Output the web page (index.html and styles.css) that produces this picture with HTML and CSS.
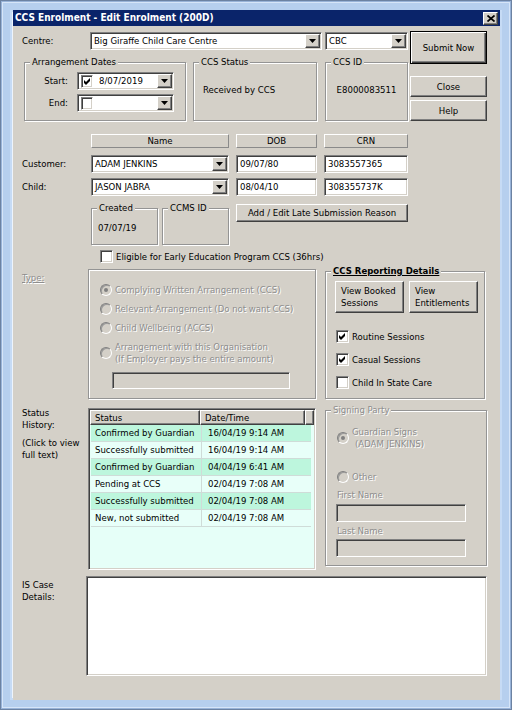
FILE: index.html
```html
<!DOCTYPE html>
<html lang="en">
<head>
<meta charset="utf-8">
<title>CCS Enrolment - Edit Enrolment</title>
<link rel="stylesheet" href="styles.css">
</head>
<body>
<div class="window">
  <div class="titlebar">
    <span class="title">CCS Enrolment - Edit Enrolment (200D)</span>
    <span class="xbtn raised"><svg width="8" height="7" viewBox="0 0 8 7"><path d="M0.5 0.5 7.5 6.5M7.5 0.5 0.5 6.5" stroke="#000" stroke-width="1.7"/></svg></span>
  </div>
  <div class="dialog">
    <!-- Section A -->
    <div class="sec-a">
      <div class="a-main">
        <div class="r-centre">
          <span class="lbl-centre">Centre:</span>
          <div class="combo sunken combo-centre"><span class="field-text">Big Giraffe Child Care Centre</span><span class="drop raised"></span></div>
          <div class="combo sunken combo-cbc"><span class="field-text">CBC</span><span class="drop raised"></span></div>
        </div>
        <div class="r-groups">
          <div class="group g-dates">
            <span class="gtitle">Arrangement Dates</span>
            <div class="dates-grid">
              <span class="dlbl">Start:</span>
              <div class="dtp sunken"><span class="cb"><svg width="7" height="7" viewBox="0 0 7 7"><polygon points="0,2 2,4 6,0 6,3 2,7 0,5"/></svg></span><span class="dtp-text">8/07/2019</span><span class="drop raised"></span></div>
              <span class="dlbl">End:</span>
              <div class="dtp sunken"><span class="cb"></span><span class="dtp-text"></span><span class="drop raised"></span></div>
            </div>
          </div>
          <div class="group g-status">
            <span class="gtitle">CCS Status</span>
            <div class="gval">Received by CCS</div>
          </div>
          <div class="group g-id">
            <span class="gtitle">CCS ID</span>
            <div class="gval gval-center">E8000083511</div>
          </div>
        </div>
      </div>
      <div class="a-buttons">
        <button class="btn btn-default btn-submit">Submit Now</button>
        <button class="btn raised btn-close">Close</button>
        <button class="btn raised btn-help">Help</button>
      </div>
    </div>

    <!-- Section B -->
    <div class="sec-b">
      <span class="colhead h-name">Name</span>
      <span class="colhead">DOB</span>
      <span class="colhead">CRN</span>

      <span class="rowlbl">Customer:</span>
      <div class="combo sunken"><span class="field-text">ADAM JENKINS</span><span class="drop raised"></span></div>
      <div class="tbox sunken">09/07/80</div>
      <div class="tbox sunken">3083557365</div>

      <span class="rowlbl">Child:</span>
      <div class="combo sunken"><span class="field-text">JASON JABRA</span><span class="drop raised"></span></div>
      <div class="tbox sunken">08/04/10</div>
      <div class="tbox sunken">308355737K</div>

      <div class="small-groups">
        <div class="group g-small">
          <span class="gtitle">Created</span>
          <div class="small-val">07/07/19</div>
        </div>
        <div class="group g-small">
          <span class="gtitle">CCMS ID</span>
        </div>
      </div>
      <button class="btn raised btn-late">Add / Edit Late Submission Reason</button>
    </div>

    <!-- Section C -->
    <div class="sec-c">
      <span class="cb"></span>
      <span>Eligible for Early Education Program CCS (36hrs)</span>
    </div>

    <!-- Section D -->
    <div class="sec-d">
      <span class="type-lbl disabled">Type:</span>
      <div class="group type-box">
        <div class="radio-row disabled"><span class="rb checked"></span><span>Complying Written Arrangement (CCS)</span></div>
        <div class="radio-row disabled"><span class="rb"></span><span>Relevant Arrangement (Do not want CCS)</span></div>
        <div class="radio-row disabled"><span class="rb"></span><span>Child Wellbeing (ACCS)</span></div>
        <div class="radio-row radio-two disabled"><span class="rb"></span><span class="two-lines">Arrangement with this Organisation<br>(If Employer pays the entire amount)</span></div>
        <div class="tbox sunken tbox-disabled type-input"></div>
      </div>
      <div class="group rep-group">
        <span class="gtitle gtitle-bold">CCS Reporting Details</span>
        <div class="rep-buttons">
          <button class="btn raised btn-two">View Booked<br>Sessions</button>
          <button class="btn raised btn-two">View<br>Entitlements</button>
        </div>
        <div class="check-list">
          <div class="check-row"><span class="cb"><svg width="7" height="7" viewBox="0 0 7 7"><polygon points="0,2 2,4 6,0 6,3 2,7 0,5"/></svg></span><span>Routine Sessions</span></div>
          <div class="check-row"><span class="cb"><svg width="7" height="7" viewBox="0 0 7 7"><polygon points="0,2 2,4 6,0 6,3 2,7 0,5"/></svg></span><span>Casual Sessions</span></div>
          <div class="check-row"><span class="cb"></span><span>Child In State Care</span></div>
        </div>
      </div>
    </div>

    <!-- Section E -->
    <div class="sec-e">
      <div class="hist-lbl">
        <div>Status<br>History:</div>
        <div class="hist-note">(Click to view<br>full text)</div>
      </div>
      <div class="list sunken">
        <div class="lhead">
          <span class="hc hc1 raised">Status</span>
          <span class="hc hc2 raised">Date/Time</span>
          <span class="hc hc3 raised"></span>
        </div>
        <div class="lrow hl"><span class="c1">Confirmed by Guardian</span><span class="c2">16/04/19 9:14 AM</span></div>
        <div class="lrow"><span class="c1">Successfully submitted</span><span class="c2">16/04/19 9:14 AM</span></div>
        <div class="lrow hl"><span class="c1">Confirmed by Guardian</span><span class="c2">04/04/19 6:41 AM</span></div>
        <div class="lrow"><span class="c1">Pending at CCS</span><span class="c2">02/04/19 7:08 AM</span></div>
        <div class="lrow hl"><span class="c1">Successfully submitted</span><span class="c2">02/04/19 7:08 AM</span></div>
        <div class="lrow"><span class="c1">New, not submitted</span><span class="c2">02/04/19 7:08 AM</span></div>
      </div>
      <div class="group sign-group">
        <span class="gtitle disabled">Signing Party</span>
        <div class="radio-row sign-guardian disabled"><span class="rb checked"></span><span class="two-lines">Guardian Signs<br><span class="indent">(ADAM JENKINS)</span></span></div>
        <div class="radio-row sign-other disabled"><span class="rb"></span><span>Other</span></div>
        <div class="field-lbl disabled">First Name</div>
        <div class="tbox sunken tbox-disabled sign-input"></div>
        <div class="field-lbl field-lbl-2 disabled">Last Name</div>
        <div class="tbox sunken tbox-disabled sign-input sign-input-2"></div>
      </div>
    </div>

    <!-- Section F -->
    <div class="sec-f">
      <div class="case-lbl">IS Case<br>Details:</div>
      <div class="textarea sunken"></div>
    </div>
  </div>
</div>
</body>
</html>
```

FILE: styles.css
```css
* { box-sizing: border-box; }

html, body {
  margin: 0;
  padding: 0;
}

body {
  width: 512px;
  height: 710px;
  overflow: hidden;
  font-family: "DejaVu Sans Condensed", "Liberation Sans", sans-serif;
  font-size: 9.5px;
  line-height: 12px;
  color: #000;
  background: #b8d0ee;
}

/* ---------- window frame ---------- */
.window {
  width: 512px;
  height: 710px;
  padding: 10px 12px 10px 13px;
  display: flex;
  flex-direction: column;
  background: #b8d0ee;
  box-shadow:
    inset 0 0 0 1px #6c82a2,
    inset 0 0 0 2px #98b3d8,
    inset 0 0 0 3px #d6e5f8,
    inset 0 0 0 10px #b6cfee,
    inset 0 0 0 12px #c6dbf5,
    inset 0 0 0 13px #eef4fc;
}

.titlebar {
  height: 16px;
  flex: none;
  background: #0a246a;
  display: flex;
  align-items: center;
  justify-content: space-between;
  padding-left: 2px;
}

.title {
  color: #fff;
  font-weight: bold;
  font-size: 10px;
  white-space: nowrap;
}

.xbtn {
  width: 15px;
  height: 13px;
  margin-right: 2px;
  display: flex;
  align-items: center;
  justify-content: center;
}

.dialog {
  flex: 1;
  background: #d4d0c8;
  padding: 5px 0 0 9px;
  display: flex;
  flex-direction: column;
}

/* ---------- common controls ---------- */
.sunken {
  border: 1px solid;
  border-color: #808080 #ffffff #ffffff #808080;
  box-shadow: inset 1px 1px 0 #404040, inset -1px -1px 0 #d4d0c8;
  background: #fff;
}

.raised {
  border: 1px solid;
  border-color: #ffffff #404040 #404040 #ffffff;
  box-shadow: inset -1px -1px 0 #808080;
  background: #d4d0c8;
}

.btn {
  font: inherit;
  color: #000;
  padding: 0;
  margin: 0;
  text-align: center;
  cursor: default;
}

.btn-default {
  border: 1px solid #000;
  background: #d4d0c8;
  box-shadow: inset 1px 1px 0 #fff, inset -1px -1px 0 #404040, inset -2px -2px 0 #808080;
}

.combo {
  height: 18px;
  padding: 1px;
  display: flex;
  align-items: center;
}

.field-text {
  flex: 1;
  padding-left: 2px;
  white-space: nowrap;
  overflow: hidden;
}

.drop {
  flex: none;
  width: 15px;
  height: 14px;
  display: flex;
  align-items: center;
  justify-content: center;
}

.drop::after {
  content: "";
  width: 7px;
  height: 4px;
  background: #000;
  clip-path: polygon(0 0, 100% 0, 50% 100%);
}

.tbox {
  height: 18px;
  padding-left: 3px;
  line-height: 16px;
  white-space: nowrap;
}

.tbox-disabled {
  background: #d4d0c8;
}

.cb {
  flex: none;
  width: 13px;
  height: 13px;
  border: 1px solid;
  border-color: #808080 #ffffff #ffffff #808080;
  box-shadow: inset 1px 1px 0 #404040, inset -1px -1px 0 #d4d0c8;
  background: #fff;
  display: flex;
  align-items: center;
  justify-content: center;
}

.rb {
  flex: none;
  width: 12px;
  height: 12px;
  border-radius: 50%;
  border: 1px solid;
  border-color: #808080 #ffffff #ffffff #808080;
  box-shadow: inset 1px 1px 0 #9a9a9a;
  background: #d4d0c8;
  display: flex;
  align-items: center;
  justify-content: center;
}

.rb.checked::after {
  content: "";
  width: 4px;
  height: 4px;
  border-radius: 50%;
  background: #808080;
}

.disabled {
  color: #8e8e8e;
  text-shadow: 1px 1px 0 #fff;
}

.group {
  position: relative;
  border: 1px solid #949494;
  box-shadow: inset 1px 1px 0 #fff, 1px 1px 0 #fff;
}

.gtitle {
  position: absolute;
  top: -7px;
  left: 5px;
  padding: 0 2px;
  line-height: 12px;
  background: #d4d0c8;
  white-space: nowrap;
}

.gtitle-bold {
  font-weight: bold;
  text-decoration: underline;
}

/* ---------- section A ---------- */
.sec-a {
  display: flex;
  gap: 2px;
  height: 90px;
}

.a-main {
  width: 386px;
  display: flex;
  flex-direction: column;
}

.r-centre {
  display: flex;
  align-items: center;
  margin-top: 1px;
  height: 18px;
}

.lbl-centre { width: 68px; }

.combo-centre {
  width: 232px;
  margin-right: 3px;
}

.combo-cbc { width: 83px; }

.r-groups {
  display: flex;
  margin-top: 12px;
  padding-left: 2px;
  height: 59px;
}

.g-dates { width: 162px; }

.g-status {
  width: 124px;
  margin-left: 7px;
}

.g-id {
  width: 83px;
  margin-left: 8px;
}

.dates-grid {
  display: grid;
  grid-template-columns: 43px 97px;
  column-gap: 9px;
  row-gap: 4px;
  padding-top: 9px;
  align-items: center;
}

.dlbl { text-align: right; }

.dtp {
  height: 18px;
  padding: 1px 1px 1px 3px;
  display: flex;
  align-items: center;
}

.dtp .cb {
  width: 12px;
  height: 13px;
}

.dtp-text {
  flex: 1;
  padding-left: 6px;
}

.gval {
  padding: 21px 0 0 9px;
  white-space: nowrap;
}

.gval-center {
  padding-left: 0;
  text-align: center;
}

.a-buttons {
  width: 77px;
  display: flex;
  flex-direction: column;
}

.btn-submit { height: 33px; }

.btn-close {
  height: 21px;
  margin-top: 12px;
}

.btn-help {
  height: 21px;
  margin-top: 3px;
}

/* ---------- section B ---------- */
.sec-b {
  margin-top: 13px;
  display: grid;
  grid-template-columns: 62px 138px 81px 84px;
  grid-template-rows: 14px 25px 23px 49px;
  column-gap: 7px;
  align-items: end;
}

.colhead {
  height: 14px;
  line-height: 12px;
  text-align: center;
  border: 1px solid;
  border-color: #ffffff #8a8a8a #8a8a8a #ffffff;
  background: #d4d0c8;
}

.h-name { grid-column: 2; }

.rowlbl {
  line-height: 18px;
  height: 18px;
}

.small-groups {
  grid-column: 2;
  display: flex;
  gap: 4px;
  height: 37px;
}

.g-small {
  width: 67px;
  height: 37px;
}

.small-val {
  padding: 13px 0 0 6px;
}

.btn-late {
  grid-column: 3 / span 2;
  align-self: start;
  margin-top: 8px;
  height: 18px;
}

/* ---------- section C ---------- */
.sec-c {
  margin-top: 5px;
  height: 13px;
  display: flex;
  align-items: center;
  gap: 3px;
  padding-left: 78px;
  white-space: nowrap;
}

/* ---------- section D ---------- */
.sec-d {
  margin-top: 6px;
  display: flex;
  height: 130px;
}

.type-lbl {
  width: 66px;
  padding-top: 3px;
  text-decoration: underline;
}

.type-box {
  width: 228px;
  height: 130px;
  padding: 10px 0 0 11px;
}

.radio-row {
  display: flex;
  align-items: center;
  gap: 3px;
  height: 19px;
  white-space: nowrap;
}

.radio-two {
  margin-top: 4px;
  height: 24px;
}

.two-lines { line-height: 12px; }

.type-input {
  width: 178px;
  height: 17px;
  margin: 7px 0 0 12px;
}

.rep-group {
  width: 160px;
  height: 128px;
  margin: 2px 0 0 9px;
  padding: 9px 0 0 9px;
}

.rep-buttons {
  display: flex;
  gap: 5px;
}

.btn-two {
  width: 69px;
  height: 32px;
  text-align: left;
  padding-left: 5px;
  line-height: 12px;
}

.check-list {
  margin-top: 12px;
  padding-left: 1px;
}

.check-row {
  display: flex;
  align-items: center;
  gap: 3px;
  height: 23px;
  white-space: nowrap;
}

/* ---------- section E ---------- */
.sec-e {
  margin-top: 9px;
  display: flex;
}

.hist-lbl {
  width: 66px;
  line-height: 11.5px;
  margin-top: -1px;
}

.hist-note { margin-top: 7px; }

.list {
  width: 228px;
  height: 162px;
  padding: 1px;
  background: #e6fff8;
  overflow: hidden;
}

.lhead {
  display: flex;
  height: 15px;
}

.hc {
  height: 15px;
  line-height: 13px;
  padding-left: 4px;
  white-space: nowrap;
}

.hc1 { width: 110px; }
.hc2 { width: 105px; }
.hc3 { flex: 1; }

.lrow {
  display: flex;
  width: 220px;
  height: 17px;
  margin-left: 1px;
  background: #e8fff9;
  border-bottom: 1px solid #cfdcd8;
  white-space: nowrap;
  line-height: 16px;
}

.lrow.hl { background: #bdf6dd; }

.c1 {
  width: 111px;
  padding-left: 4px;
  border-right: 1px solid #cfdcd8;
}

.c2 {
  flex: 1;
  padding-left: 6px;
}

.sign-group {
  width: 162px;
  height: 156px;
  margin: 2px 0 0 9px;
  padding: 15px 0 0 10px;
}

.sign-guardian {
  height: 24px;
  margin-left: 1px;
}

.indent { padding-left: 3px; }

.sign-other {
  height: 13px;
  margin: 20px 0 0 1px;
}

.field-lbl {
  margin: 6px 0 0 1px;
  line-height: 12px;
}

.field-lbl-2 { margin-top: 3px; }

.sign-input {
  width: 130px;
  height: 18px;
  margin-top: 3px;
}

.sign-input-2 { margin-top: 2px; }

/* ---------- section F ---------- */
.sec-f {
  margin-top: 6px;
  display: flex;
}

.case-lbl {
  width: 64px;
  padding-top: 3px;
  line-height: 12px;
}

.textarea {
  width: 401px;
  height: 100px;
}
```
